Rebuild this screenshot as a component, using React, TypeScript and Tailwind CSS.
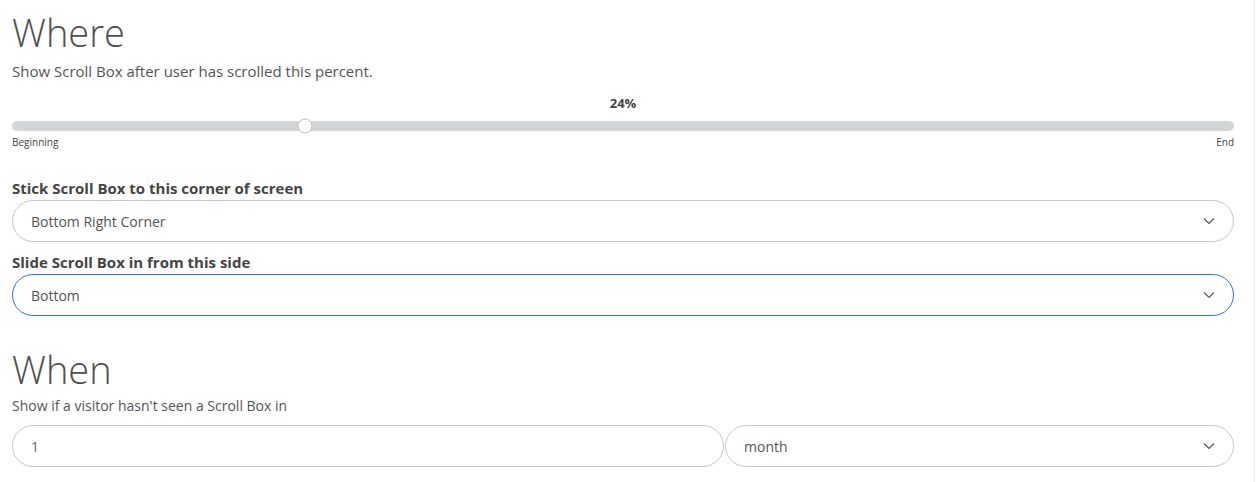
import React, { useState } from 'react';

const Chevron: React.FC = () => (
  <svg width="12" height="8" viewBox="0 0 12 8" fill="none" className="text-[#555]">
    <path d="M1 1.5l5 5 5-5" stroke="currentColor" strokeWidth="1.1" />
  </svg>
);

const Select: React.FC<{ value: string; focused?: boolean; className?: string }> = ({ value, focused, className = '' }) => (
  <div
    className={`flex items-center justify-between h-[42px] rounded-full border bg-white pl-[18px] pr-[18px] ${
      focused ? 'border-[#2f74e0]' : 'border-[#c8c8c8]'
    } ${className}`}
  >
    <span className="text-[14px] text-[#555]">{value}</span>
    <Chevron />
  </div>
);

export default function App() {
  const [percent] = useState(24);

  return (
    <div className="w-[1256px] h-[482px] bg-white" style={{ fontFamily: '"Open Sans", sans-serif' }}>
      <div className="w-[1255px] h-full border-r border-[#ececec] pl-[12px] pr-[20px] pt-[9px]">
        <h1 className="text-[38px] leading-[46px] font-light text-[#505050]">Where</h1>
        <p className="mt-[6px] text-[15px] leading-[20px] text-[#555]">Show Scroll Box after user has scrolled this percent.</p>

        <div className="mt-[13px]">
          <div className="text-center text-[13px] leading-[18px] font-bold text-[#444]">{percent}%</div>
          <div className="relative mt-[9px] h-[10px] rounded-full bg-[#d4d5d7]">
            <div
              className="absolute top-1/2 h-[15px] w-[15px] -translate-x-1/2 -translate-y-1/2 rounded-full border border-[#bdbdbd] bg-white"
              style={{ left: `${percent}%` }}
            />
          </div>
          <div className="mt-[4px] flex justify-between text-[10px] leading-[14px] text-[#444]">
            <span>Beginning</span>
            <span>End</span>
          </div>
        </div>

        <label className="mt-[29px] block text-[15px] leading-[20px] font-bold text-[#444]">
          Stick Scroll Box to this corner of screen
        </label>
        <Select value="Bottom Right Corner" className="mt-[2px]" />

        <label className="mt-[10px] block text-[15px] leading-[20px] font-bold text-[#444]">
          Slide Scroll Box in from this side
        </label>
        <Select value="Bottom" focused className="mt-[2px]" />

        <h2 className="mt-[30px] text-[38px] leading-[46px] font-light text-[#505050]">When</h2>
        <p className="mt-[4px] text-[14px] leading-[20px] text-[#555]">Show if a visitor hasn't seen a Scroll Box in</p>

        <div className="mt-[9px] flex gap-px">
          <div className="flex items-center h-[42px] w-[712px] rounded-full border border-[#c8c8c8] pl-[18px]">
            <span className="text-[14px] text-[#666]">1</span>
          </div>
          <Select value="month" className="flex-1" />
        </div>
      </div>
    </div>
  );
}
